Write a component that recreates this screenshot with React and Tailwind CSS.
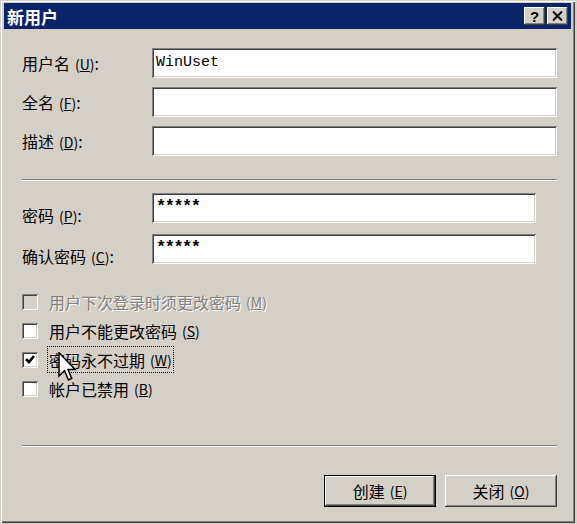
import React from "react";

const raised =
  "shadow-[inset_-1px_-1px_0_#404040,inset_1px_1px_0_#ffffff,inset_-2px_-2px_0_#808080,inset_2px_2px_0_#d4d0c8]";
const sunken =
  "shadow-[inset_1px_1px_0_#808080,inset_-1px_-1px_0_#ffffff,inset_2px_2px_0_#404040,inset_-2px_-2px_0_#d4d0c8]";

function Key({ k }) {
  return (
    <span className="ml-[5px] text-[14px]">
      (<u>{k}</u>)
    </span>
  );
}

function Field({ label, k, value, width, offset, secret }) {
  return (
    <div className="flex items-center">
      <div className={`w-[130px] shrink-0 text-[16px] leading-none ${offset ? "pt-[13px]" : ""}`}>
        {label}
        <Key k={k} />:
      </div>
      <div
        className={`h-[30px] bg-white ${sunken} flex pl-[4px] font-['Liberation_Mono',monospace] ${secret ? "items-start pt-[5px] text-[17px] font-bold tracking-[-1.5px] leading-none" : "items-center text-[15px]"} ${width}`}
      >
        {value}
      </div>
    </div>
  );
}

function Check({ label, k, checked, disabled, focused, children }) {
  return (
    <div className="relative flex h-[29px] items-center">
      <div
        className={`h-[16px] w-[16px] shrink-0 ${sunken} ${disabled ? "bg-[#d4d0c8]" : "bg-white"} flex items-center justify-center`}
      >
        {checked && (
          <svg width="10" height="9" viewBox="0 0 10 9">
            <path d="M1 4 L4 7 L9 1" stroke="#000" strokeWidth="2.6" fill="none" />
          </svg>
        )}
      </div>
      <div
        className={`ml-[9px] flex h-[27px] items-center px-[1px] text-[16px] leading-none border border-dotted ${focused ? "border-black" : "border-transparent"} ${disabled ? "text-[#808080] [text-shadow:1px_1px_0_#fff]" : "text-black"}`}
      >
        {label}
        <Key k={k} />
      </div>
      {children}
    </div>
  );
}

function Button({ children, primary }) {
  return (
    <div className={`h-[32px] w-[112px] ${primary ? "border border-black" : ""}`}>
      <div className={`flex h-full w-full items-center justify-center bg-[#d4d0c8] ${raised} text-[16px] leading-none`}>
        {children}
      </div>
    </div>
  );
}

export default function App() {
  return (
    <div className="h-[524px] w-[577px] bg-[#d4d0c8] font-['Noto_Sans_CJK_SC',sans-serif] text-black">
      <div className="flex h-[523px] w-[575px] flex-col shadow-[inset_1px_1px_0_#d4d0c8,inset_2px_2px_0_#ffffff,inset_-1px_-1px_0_#404040,inset_-2px_-2px_0_#808080] px-[4px] pt-[3px]">
        <div className="flex h-[26px] items-center justify-between bg-[#0a246a] pl-[3px] pr-[3px]">
          <span className="text-[17px] font-bold leading-none text-white">新用户</span>
          <div className="flex gap-[2px]">
            <div className={`flex h-[18px] w-[21px] items-center justify-center bg-[#d4d0c8] ${raised} font-['Liberation_Sans',sans-serif] text-[15px] font-bold leading-none`}>
              ?
            </div>
            <div className={`flex h-[18px] w-[21px] items-center justify-center bg-[#d4d0c8] ${raised}`}>
              <svg width="11" height="10" viewBox="0 0 11 10">
                <path d="M1 0.5 L10 9.5 M10 0.5 L1 9.5" stroke="#000" strokeWidth="2" />
              </svg>
            </div>
          </div>
        </div>

        <div className="flex flex-col pl-[18px]">
          <div className="mt-[19px] flex flex-col gap-[9px]">
            <Field label="用户名" k="U" value="WinUset" width="w-[405px]" />
            <Field label="全名" k="F" value="" width="w-[405px]" />
            <Field label="描述" k="D" value="" width="w-[405px]" />
          </div>

          <div className="mt-[23px] h-[2px] w-[535px] border-t border-t-[#808080] border-b border-b-white" />

          <div className="mt-[12px] flex flex-col gap-[11px]">
            <Field label="密码" k="P" value="*****" width="w-[384px]" offset secret />
            <Field label="确认密码" k="C" value="*****" width="w-[384px]" offset secret />
          </div>

          <div className="mt-[23px] flex flex-col">
            <Check label="用户下次登录时须更改密码" k="M" disabled />
            <Check label="用户不能更改密码" k="S" />
            <Check label="密码永不过期" k="W" checked focused>
              <svg className="absolute left-[36px] top-[7px]" width="20" height="30" viewBox="0 0 13 20">
                <path
                  d="M0.5 0.5 L0.5 16 L4.2 12.5 L6.8 18.6 L9 17.6 L6.5 11.7 L11.3 11.7 Z"
                  fill="#fff"
                  stroke="#000"
                  strokeWidth="1"
                  strokeLinejoin="miter"
                />
              </svg>
            </Check>
            <Check label="帐户已禁用" k="B" />
          </div>

          <div className="mt-[42px] h-[2px] w-[535px] border-t border-t-[#808080] border-b border-b-white" />

          <div className="mt-[28px] flex w-[535px] justify-end gap-[9px]">
            <Button primary>
              创建<Key k="E" />
            </Button>
            <Button>
              关闭<Key k="O" />
            </Button>
          </div>
        </div>
      </div>
    </div>
  );
}
